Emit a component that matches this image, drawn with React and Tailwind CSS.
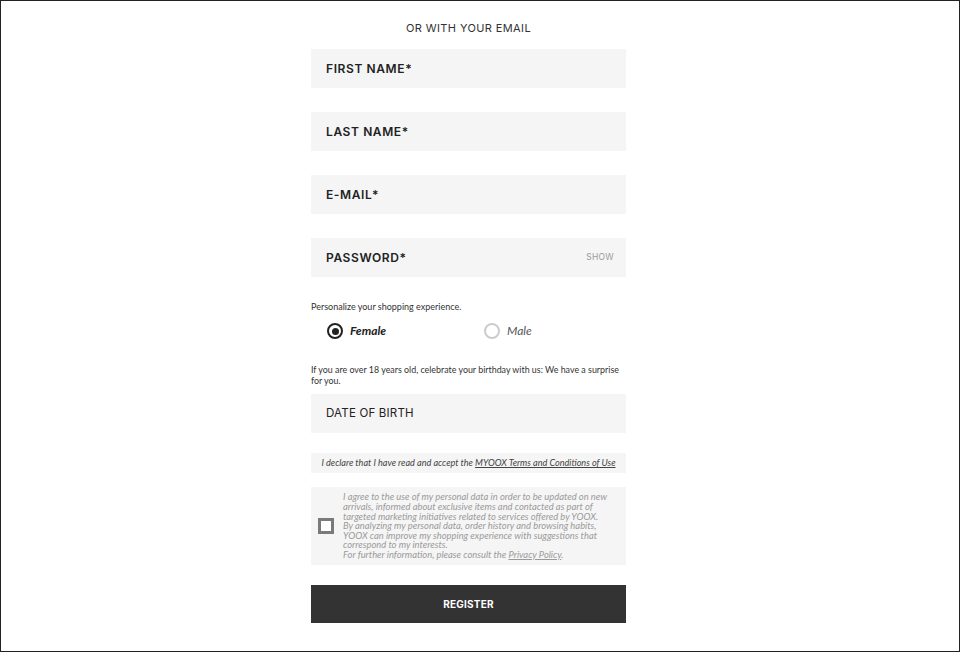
export default function App() {
  const head = { fontFamily: 'Inter, "Open Sans", sans-serif' };
  const body = { fontFamily: 'Lato, "Open Sans", sans-serif' };

  const Field = ({ label, right, bold = true }) => (
    <div className="h-[39px] bg-[#f5f5f5] flex items-center justify-between pl-[15px] pr-[12px]">
      <span
        style={head}
        className={
          bold
            ? 'text-[12px] tracking-[0.6px] font-semibold text-[#222]'
            : 'text-[11.5px] tracking-[0.2px] font-normal text-[#222]'
        }
      >
        {label}
      </span>
      {right && (
        <span style={head} className="text-[8.5px] text-[#999] tracking-[0.3px]">
          {right}
        </span>
      )}
    </div>
  );

  return (
    <div className="w-[960px] h-[652px] border border-[#222] bg-white flex overflow-hidden">
      <div className="ml-[310px] w-[315px] flex flex-col pt-[20px]">
        <div style={head} className="text-center text-[11px] text-[#333] tracking-[0.4px] leading-[14px]">
          OR WITH YOUR EMAIL
        </div>

        <div className="mt-[14px] flex flex-col gap-[24px]">
          <Field label="FIRST NAME*" />
          <Field label="LAST NAME*" />
          <Field label="E-MAIL*" />
          <Field label="PASSWORD*" right="SHOW" />
        </div>

        <p style={body} className="mt-[24px] text-[9px] leading-[12px] text-[#333]">
          Personalize your shopping experience.
        </p>

        <div className="mt-[8px] flex items-center h-[20px]">
          <div className="w-[173px] flex items-center pl-[16px] gap-[7px]">
            <span className="w-[16px] h-[16px] rounded-full border-[2px] border-[#222] flex items-center justify-center">
              <span className="w-[7px] h-[7px] rounded-full bg-[#222]" />
            </span>
            <span style={body} className="text-[12px] italic font-bold text-[#222]">
              Female
            </span>
          </div>
          <div className="flex items-center gap-[7px]">
            <span className="w-[16px] h-[16px] rounded-full border-[2px] border-[#ccc]" />
            <span style={body} className="text-[12px] italic text-[#555]">
              Male
            </span>
          </div>
        </div>

        <p style={body} className="mt-[23px] text-[8.9px] leading-[11px] text-[#333]">
          If you are over 18 years old, celebrate your birthday with us: We have a surprise for you.
        </p>

        <div className="mt-[8px]">
          <Field label="DATE OF BIRTH" bold={false} />
        </div>

        <div className="mt-[20px] h-[20px] bg-[#f5f5f5] flex items-center justify-center">
          <p style={body} className="text-[9.1px] italic text-[#444]">
            I declare that I have read and accept the{' '}
            <span className="underline">MYOOX Terms and Conditions of Use</span>
          </p>
        </div>

        <div className="mt-[14px] h-[78px] bg-[#f5f5f5] flex items-center pl-[7px] gap-[9px]">
          <span className="shrink-0 w-[16px] h-[16px] border-[3px] border-[#7a7a7a] bg-white" />
          <p style={body} className="w-[266px] text-[9.4px] leading-[9.6px] italic text-[#9a9a9a]">
            I agree to the use of my personal data in order to be updated on new arrivals, informed about
            exclusive items and contacted as part of targeted marketing initiatives related to services offered
            by YOOX.
            <br />
            By analyzing my personal data, order history and browsing habits, YOOX can improve my shopping
            experience with suggestions that correspond to my interests.
            <br />
            For further information, please consult the <span className="underline">Privacy Policy</span>.
          </p>
        </div>

        <button className="mt-[20px] h-[38px] bg-[#333] text-white flex items-center justify-center">
          <span style={head} className="text-[10px] font-bold tracking-[0.2px]">
            REGISTER
          </span>
        </button>
      </div>
    </div>
  );
}
